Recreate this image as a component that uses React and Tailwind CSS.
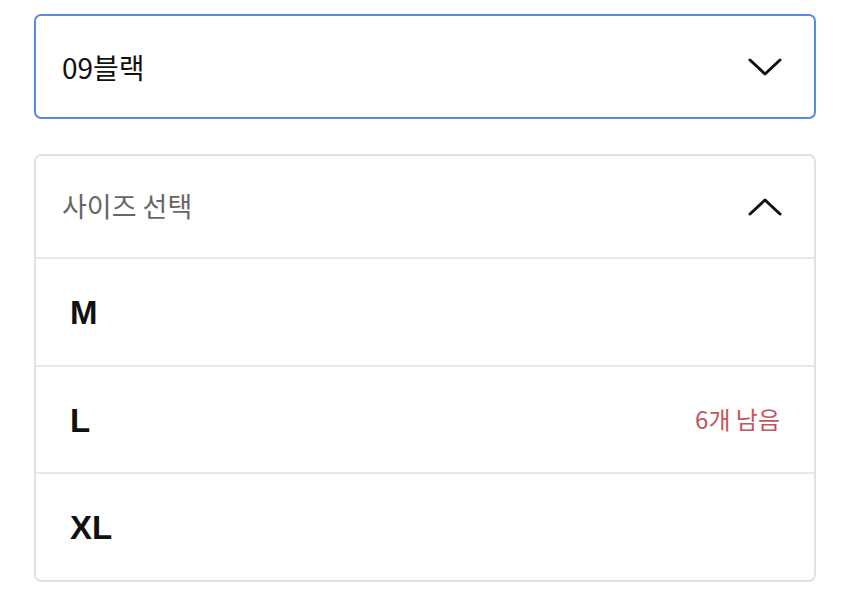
import { useState } from 'react';

const Chevron = ({ up }) => (
  <svg width="34" height="18" viewBox="0 0 34 18" fill="none" className="shrink-0">
    <path
      d={up ? 'M2 16 L17 2 L32 16' : 'M2 2 L17 16 L32 2'}
      stroke="#111"
      strokeWidth="3"
      strokeLinecap="round"
      strokeLinejoin="round"
    />
  </svg>
);

const sizes = [
  { name: 'M', stock: null },
  { name: 'L', stock: '6개 남음' },
  { name: 'XL', stock: null },
];

const App = () => {
  const [color] = useState('09블랙');

  return (
    <div
      className="min-h-[598px] bg-white px-[34px] pt-[14px]"
      style={{ fontFamily: '"Noto Sans CJK KR", "Noto Sans", sans-serif' }}
    >
      <div className="w-[782px]">
        {/* color select */}
        <div className="h-[105px] flex items-center justify-between border-2 border-[#5a8bd8] rounded-[7px] pl-[26px] pr-[32px]">
          <span className="text-[28px] text-[#111]">{color}</span>
          <Chevron />
        </div>

        {/* size select */}
        <div className="mt-[35px] border-2 border-[#e2e2e2] rounded-[7px]">
          <div className="h-[101px] flex items-center justify-between pl-[26px] pr-[32px]">
            <span className="text-[27px] text-[#666]">사이즈 선택</span>
            <Chevron up />
          </div>
          {sizes.map((size) => (
            <div
              key={size.name}
              className="h-[107.5px] flex items-center justify-between border-t-2 border-[#e8e8e8] pl-[34px] pr-[34px]"
            >
              <span
                className="text-[33px] font-bold text-[#111] pt-[2px]"
                style={{ fontFamily: '"Liberation Sans", Arial, sans-serif' }}
              >
                {size.name}
              </span>
              {size.stock && (
                <span className="text-[24px] text-[#c4545e]">{size.stock}</span>
              )}
            </div>
          ))}
        </div>
      </div>
    </div>
  );
};

export default App;
